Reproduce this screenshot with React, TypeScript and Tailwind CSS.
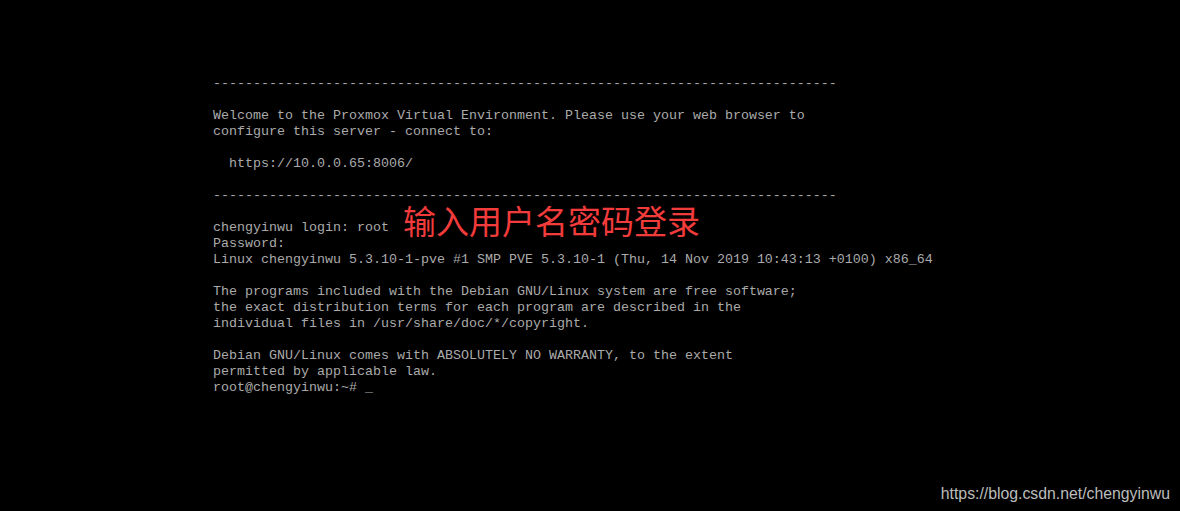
import React from 'react';

const lines: string[] = [
  '-'.repeat(78),
  '',
  'Welcome to the Proxmox Virtual Environment. Please use your web browser to',
  'configure this server - connect to:',
  '',
  '  https://10.0.0.65:8006/',
  '',
  '-'.repeat(78),
  '',
  'chengyinwu login: root',
  'Password:',
  'Linux chengyinwu 5.3.10-1-pve #1 SMP PVE 5.3.10-1 (Thu, 14 Nov 2019 10:43:13 +0100) x86_64',
  '',
  'The programs included with the Debian GNU/Linux system are free software;',
  'the exact distribution terms for each program are described in the',
  'individual files in /usr/share/doc/*/copyright.',
  '',
  'Debian GNU/Linux comes with ABSOLUTELY NO WARRANTY, to the extent',
  'permitted by applicable law.',
  'root@chengyinwu:~# _',
];

export default function App() {
  return (
    <div className="relative w-[1180px] h-[511px] bg-black overflow-hidden">
      {/* console output */}
      <pre className="pl-[213px] pt-[76px] m-0 text-[13.33px] leading-[16px] text-[#aaaaaa] font-['Liberation_Mono','DejaVu_Sans_Mono',monospace]">
        {lines.map((l, i) => (
          <div key={i} className="h-[16px] whitespace-pre">{l}</div>
        ))}
      </pre>

      {/* annotation */}
      <div className="absolute left-[403px] top-[205px] text-[33px] leading-[30px] text-[#f23b3b] font-['Noto_Sans_CJK_SC',sans-serif]">
        输入用户名密码登录
      </div>

      {/* watermark */}
      <div className="absolute right-[10px] bottom-[9px] text-[15.8px] leading-none text-[#bcbcbc] font-['Liberation_Sans',Arial,sans-serif]">
        https://blog.csdn.net/chengyinwu
      </div>
    </div>
  );
}
